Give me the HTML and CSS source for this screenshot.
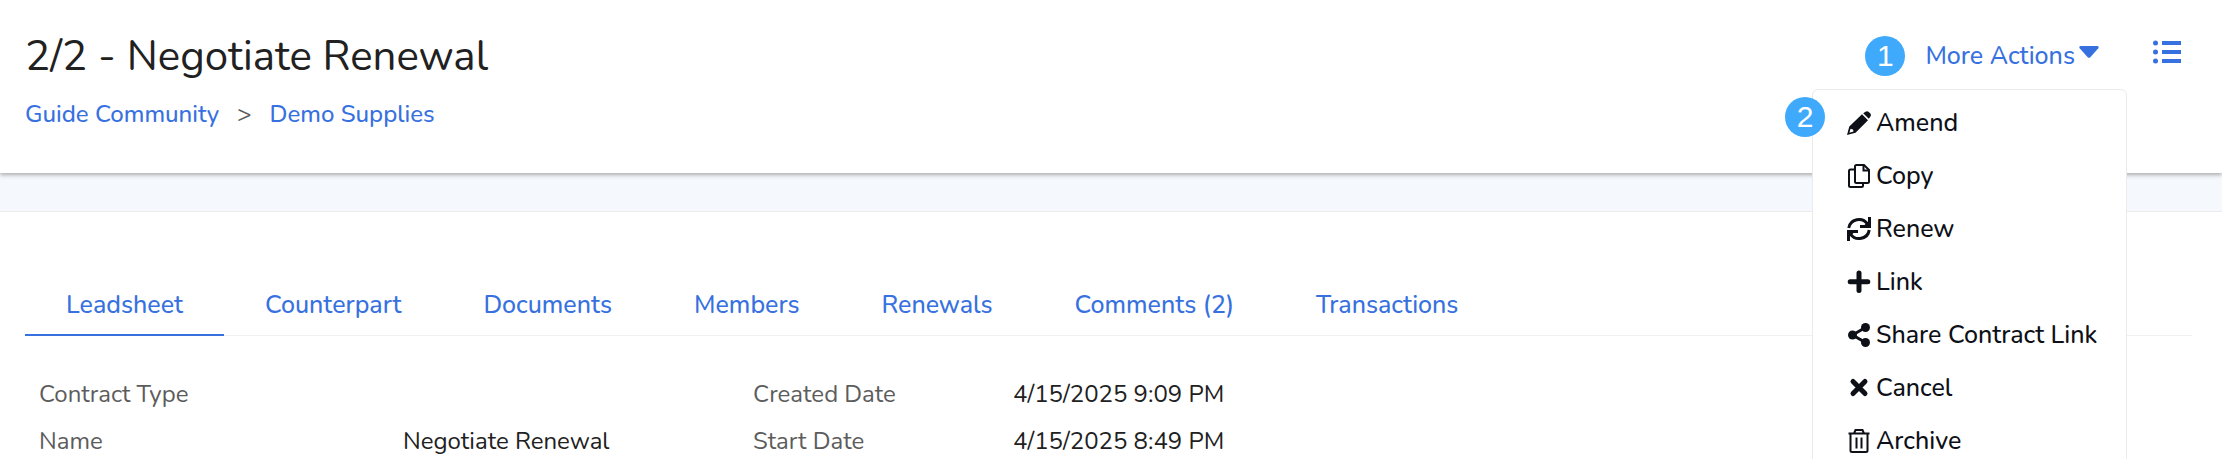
FILE: index.html
```html
<!DOCTYPE html>
<html lang="en">
<head>
    <meta charset="UTF-8">
    <meta name="viewport" content="width=device-width, initial-scale=1.0">
    <title>2/2 - Negotiate Renewal</title>
    <link rel="stylesheet" href="styles.css">
</head>
<body>
    <header class="page-header">
        <div class="heading">
            <h1>2/2 - Negotiate Renewal</h1>
            <nav class="breadcrumb" aria-label="Breadcrumb">
                <a href="#">Guide Community</a>
                <span>&gt;</span>
                <a href="#">Demo Supplies</a>
            </nav>
        </div>

        <div class="actions">
            <span class="step">1</span>
            <div class="dropdown">
                <button type="button" class="more-btn">
                    More Actions
                    <svg class="caret" viewBox="0 0 20 12"><path d="M1.500 0h17q2 .5.8 2.200l-8 9q-1.300 1.300-2.600 0l-8-9Q-.5.5 1.500 0z"/></svg>
                </button>
                <div class="menu">
                    <span class="step step-menu">2</span>
                    <ul>
                        <li><a href="#">
                            <svg class="icon" viewBox="0 0 24 24"><path d="M16.200 2.200L18.500.7q1.800-1.200 3.300.3l1.300 1.300q1.500 1.500.3 3.300l-1.600 2.200z"/><path fill-rule="evenodd" d="M15 3.200l6 6L8.500 21.700 0 24l2.300-8.500zM3.600 17.700L2.400 21.800 6.500 20.500 6 18.500z"/></svg>
                            Amend</a></li>
                        <li><a href="#">
                            <svg class="icon line" viewBox="0 0 24 24"><path d="M9.500 1h7.500l5 5v11.500q0 1.500-1.500 1.500H9.500q-1.500 0-1.500-1.500v-15Q8 1 9.500 1z"/><path d="M16.500 1.500v5h5"/><path d="M8 5.500H3.500Q2 5.500 2 7v14.500Q2 23 3.500 23h11q1.500 0 1.500-1.500V19"/></svg>
                            Copy</a></li>
                        <li><a href="#">
                            <svg class="icon" viewBox="0 0 24 24"><path class="stroke" d="M1.800 11A10.200 9.800 0 0 1 20.500 7"/><path class="stroke" d="M22.200 13A10.200 9.800 0 0 1 3.500 17"/><path d="M24 0v11H13V8h4.500L21 4.500V0zM0 24V13h11v3H6.500L3 19.500V24z"/></svg>
                            Renew</a></li>
                        <li><a href="#">
                            <svg class="icon" viewBox="0 0 24 24"><path class="stroke bold" d="M12 3v17.500M3.200 11.800h17.600"/></svg>
                            Link</a></li>
                        <li><a href="#">
                            <svg class="icon" viewBox="0 0 24 24"><path class="stroke" d="M18.500 4.500L5.500 12l13 7.500"/><circle cx="18.500" cy="4.500" r="4.500"/><circle cx="5.500" cy="12" r="4.500"/><circle cx="18.500" cy="19.500" r="4.500"/></svg>
                            Share Contract Link</a></li>
                        <li><a href="#">
                            <svg class="icon" viewBox="0 0 24 24"><path class="stroke bold" d="M6 5.500l12 12M18 5.500l-12 12"/></svg>
                            Cancel</a></li>
                        <li><a href="#">
                            <svg class="icon line" viewBox="0 0 24 24"><path d="M1.500 4.500h21M7 4.500L8.500 1h7L17 4.500M3.500 4.500V21.500Q3.500 23 5 23h14q1.500 0 1.500-1.500V4.500M9.500 8.500v11M14.500 8.500v11"/></svg>
                            Archive</a></li>
                    </ul>
                </div>
            </div>
            <button type="button" class="list-btn" aria-label="List">
                <svg viewBox="0 0 28 24"><circle cx="2.500" cy="3" r="2.500"/><circle cx="2.500" cy="12" r="2.500"/><circle cx="2.500" cy="21" r="2.500"/><path d="M9 1h19v4H9zM9 10h19v4H9zM9 19h19v4H9z"/></svg>
            </button>
        </div>
    </header>

    <main>
        <nav class="tabs">
            <a href="#" class="active">Leadsheet</a>
            <a href="#">Counterpart</a>
            <a href="#">Documents</a>
            <a href="#">Members</a>
            <a href="#">Renewals</a>
            <a href="#">Comments (2)</a>
            <a href="#">Transactions</a>
        </nav>

        <dl class="details">
            <dt>Contract Type</dt>
            <dd></dd>
            <dt>Created Date</dt>
            <dd>4/15/2025 9:09 PM</dd>
            <dt>Name</dt>
            <dd>Negotiate Renewal</dd>
            <dt>Start Date</dt>
            <dd>4/15/2025 8:49 PM</dd>
        </dl>
    </main>
</body>
</html>
```
FILE: styles.css
```css
:root {
    --link-color: #3771e0;
    --text-color: #212121;
    --label-color: #5c5c5c;
    --step-color: #3fa9fc;
    --menu-color: #0d1017;
}

* {
    box-sizing: border-box;
}

body {
    font-family: Nunito, Lato, sans-serif;
    font-size: 24px;
    line-height: 36px;
    margin: 0;
    background-color: #f5f8fc;
    color: var(--text-color);
    overflow: hidden;
}

a,
button {
    color: var(--link-color);
    font-size: 25px;
    font-weight: 500;
    text-decoration: none;
}

button {
    font-family: inherit;
    line-height: inherit;
    background: none;
    border: none;
    padding: 0;
    cursor: pointer;
}

.page-header {
    display: flex;
    justify-content: space-between;
    align-items: flex-start;
    padding: 29px 30px 41px 25px;
    background-color: white;
    box-shadow: 0 2px 4px rgba(0, 0, 0, 0.3);
}

h1 {
    margin: 0 0 11px;
    font-size: 42px;
    line-height: 56px;
    font-weight: normal;
}

.breadcrumb {
    display: flex;
    gap: 18px;
}

.breadcrumb a {
    font-size: 24px;
}

.breadcrumb span {
    color: var(--label-color);
}

.actions {
    display: flex;
    align-items: center;
    padding: 7px 11px 0 0;
}

.step {
    width: 40px;
    height: 40px;
    border-radius: 50%;
    background-color: var(--step-color);
    color: white;
    font-family: "Liberation Sans", Arial, sans-serif;
    font-size: 30px;
    line-height: 40px;
    text-align: center;
}

.dropdown {
    position: relative;
    margin: 0 54px 0 20px;
}

.more-btn {
    display: flex;
    align-items: center;
    gap: 4px;
}

.caret {
    width: 20px;
    height: 12px;
    margin-bottom: 8px;
    fill: currentColor;
}

.menu {
    position: absolute;
    top: 51px;
    right: -28px;
    width: 315px;
    padding: 6px 0;
    background-color: white;
    border: 1px solid #ebebeb;
    border-radius: 6px;
}

.step-menu {
    position: absolute;
    top: 7px;
    left: -28px;
}

.menu ul {
    list-style: none;
    margin: 0;
    padding: 0;
}

.menu a {
    display: flex;
    align-items: center;
    gap: 5px;
    height: 53px;
    padding-left: 34px;
    color: var(--menu-color);
}

.icon {
    width: 24px;
    height: 24px;
    fill: currentColor;
}

.icon.line,
.icon .stroke {
    fill: none;
    stroke: currentColor;
    stroke-width: 2;
}

.icon .stroke {
    stroke-width: 3;
}

.icon .bold {
    stroke-width: 5;
    stroke-linecap: round;
}

.list-btn svg {
    display: block;
    width: 28px;
    height: 24px;
    margin-bottom: 8px;
    fill: currentColor;
}

main {
    margin-top: 38px;
    padding: 64px 30px 24px 25px;
    background-color: white;
    border-top: 1px solid #ebebeb;
}

.tabs {
    display: flex;
    border-bottom: 1px solid #f0f0f0;
}

.tabs a {
    padding: 11px 41px;
    margin-bottom: -1px;
    border-bottom: 2px solid transparent;
}

.tabs .active {
    border-color: var(--link-color);
}

.details {
    display: grid;
    grid-template-columns: 364px 350px 260px 1fr;
    row-gap: 11px;
    margin: 40px 0 0;
    padding-left: 14px;
}

.details dt {
    color: var(--label-color);
}

.details dd {
    margin: 0;
}
```
